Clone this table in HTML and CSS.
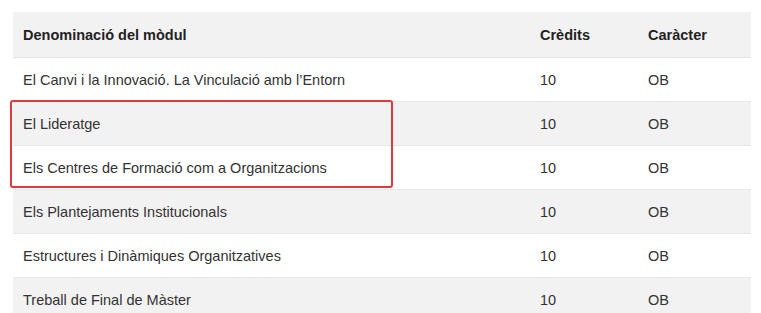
FILE: index.html
```html
<!DOCTYPE html>
<html lang="ca">
<head>
<meta charset="utf-8">
<link rel="stylesheet" href="styles.css">
</head>
<body>
<div class="wrap">
  <table class="mods">
    <thead>
      <tr><th class="c1">Denominació del mòdul</th><th class="c2">Crèdits</th><th class="c3">Caràcter</th></tr>
    </thead>
    <tbody>
      <tr><td>El Canvi i la Innovació. La Vinculació amb l’Entorn</td><td>10</td><td>OB</td></tr>
      <tr class="alt"><td>El Lideratge</td><td>10</td><td>OB</td></tr>
      <tr><td>Els Centres de Formació com a Organitzacions</td><td>10</td><td>OB</td></tr>
      <tr class="alt"><td>Els Plantejaments Institucionals</td><td>10</td><td>OB</td></tr>
      <tr><td>Estructures i Dinàmiques Organitzatives</td><td>10</td><td>OB</td></tr>
      <tr class="alt"><td>Treball de Final de Màster</td><td>10</td><td>OB</td></tr>
    </tbody>
  </table>
  <div class="highlight"></div>
</div>
</body>
</html>
```
FILE: styles.css
```css
html, body {
  margin: 0;
  padding: 0;
  background: #ffffff;
  overflow: hidden;
}
.wrap {
  position: relative;
  padding: 12px 10px 0 13px;
}
.mods {
  width: 738px;
  border-collapse: collapse;
  font-family: "Liberation Sans", Arial, sans-serif;
  font-size: 14.5px;
  color: #333333;
}
.mods th, .mods td {
  text-align: left;
  padding: 0 10px;
  vertical-align: middle;
}
.mods th {
  height: 45px;
  font-weight: bold;
  color: #222222;
  background: #f2f2f2;
  border-bottom: 1px solid #e4e4e4;
}
.mods td {
  height: 43px;
  border-top: 1px solid #e8e8e8;
}
.mods .c1 { width: 497px; }
.mods .c2 { width: 88px; }
.mods tr.alt td { background: #f2f2f2; }
.highlight {
  position: absolute;
  left: 10px;
  top: 100px;
  width: 379px;
  height: 84px;
  border: 2px solid #e0393b;
  border-radius: 3px;
}
```
